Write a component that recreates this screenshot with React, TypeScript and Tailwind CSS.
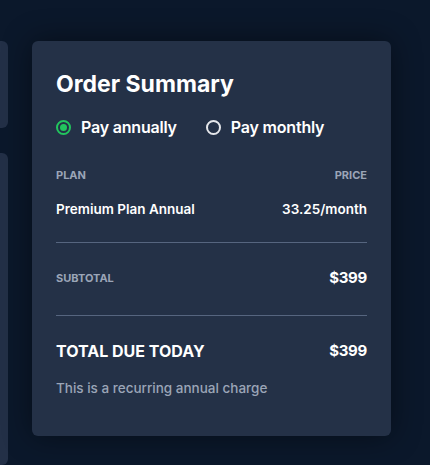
import React from "react";

function Radio({ checked, label }: { checked?: boolean; label: string }) {
  return (
    <label className="flex items-center gap-[10px]">
      <span
        className={
          checked
            ? "flex h-[15px] w-[15px] items-center justify-center rounded-full border-2 border-[#22c55e]"
            : "flex h-[15px] w-[15px] items-center justify-center rounded-full border-2 border-[#e5e7eb]"
        }
      >
        {checked && <span className="h-[7px] w-[7px] rounded-full bg-[#22c55e]" />}
      </span>
      <span className="text-[16px] font-semibold leading-5 tracking-[-0.2px] text-white">{label}</span>
    </label>
  );
}

export default function App() {
  return (
    <div
      className="flex h-[465px] w-[430px] gap-6 overflow-hidden bg-[#0b182b] pt-[41px]"
      style={{ fontFamily: "Inter, 'Noto Sans', sans-serif" }}
    >
      <div className="flex w-2 shrink-0 flex-col gap-[25px]">
        <div className="h-[87px] rounded-r-md bg-[#233047]" />
        <div className="flex-1 rounded-r-md bg-[#233047]" />
      </div>

      <div className="h-[395px] w-[359px] shrink-0 rounded-md bg-[#243147] px-6 pt-[29px] shadow-[0_0_30px_rgba(0,0,0,0.45)]">
        <h1 className="text-[23px] font-bold leading-7 text-white">Order Summary</h1>

        <div className="mt-[19px] flex items-center gap-[29px]">
          <Radio checked label="Pay annually" />
          <Radio label="Pay monthly" />
        </div>

        <div className="mt-[30px] flex justify-between text-[11px] font-bold uppercase leading-4 text-[#9ba5b7]">
          <span>Plan</span>
          <span>Price</span>
        </div>
        <div className="mt-[16px] flex justify-between text-[13.5px] font-semibold leading-5 text-white">
          <span>Premium Plan Annual</span>
          <span>33.25/month</span>
        </div>

        <div className="mt-[23px] h-px bg-[#56657f]" />

        <div className="mt-[25px] flex h-5 items-center justify-between">
          <span className="text-[11px] font-bold uppercase text-[#9ba5b7]">Subtotal</span>
          <span className="text-[15px] font-bold tracking-[-0.3px] text-white">$399</span>
        </div>

        <div className="mt-[27px] h-px bg-[#56657f]" />

        <div className="mt-[25px] flex justify-between font-bold leading-5 text-white">
          <span className="text-[16px]">TOTAL DUE TODAY</span>
          <span className="text-[15px] tracking-[-0.3px]">$399</span>
        </div>
        <p className="mt-[17px] text-[13.5px] font-medium leading-5 text-[#9ba5b7]">
          This is a recurring annual charge
        </p>
      </div>
    </div>
  );
}
